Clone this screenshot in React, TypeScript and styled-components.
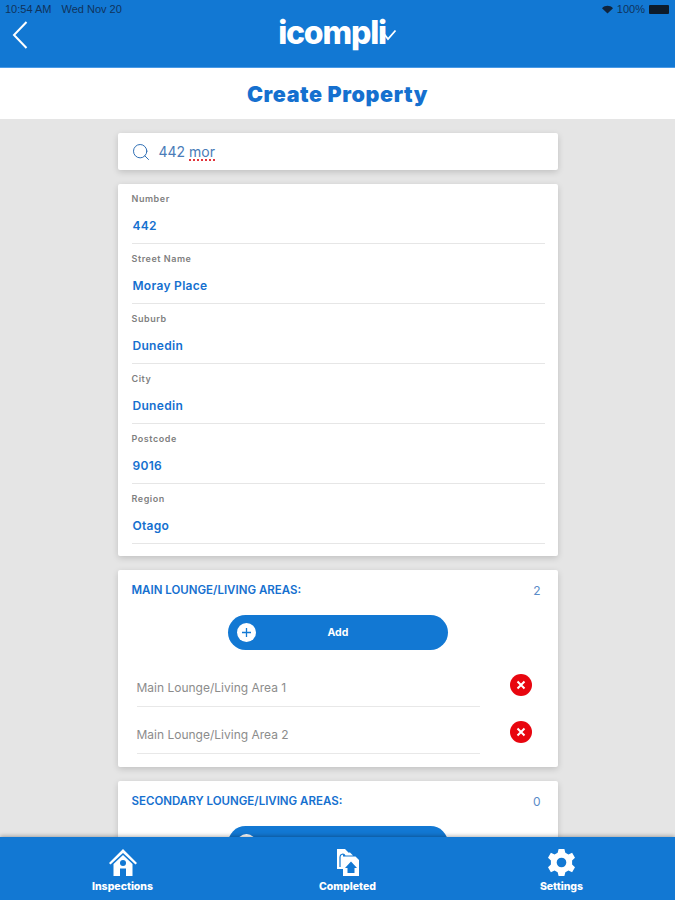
import React from "react";
import styled, { createGlobalStyle } from "styled-components";
import { Search } from "lucide-react";

const blue = "#1278d3";
const textBlue = "#1570cf";

const GlobalStyle = createGlobalStyle`
    html, body {
        margin: 0;
        padding: 0;
        background: #e5e5e5;
    }
    * {
        box-sizing: border-box;
    }
`;

const fields = [
    { label: "Number", value: "442" },
    { label: "Street Name", value: "Moray Place" },
    { label: "Suburb", value: "Dunedin" },
    { label: "City", value: "Dunedin" },
    { label: "Postcode", value: "9016" },
    { label: "Region", value: "Otago" },
];

const areas = ["Main Lounge/Living Area 1", "Main Lounge/Living Area 2"];

const WifiIcon = () => (
    <svg width="11" height="9" viewBox="0 0 11 9">
        <path d="M5.5 8.6 0 3.2C3.2 0 7.8 0 11 3.2Z" fill="#10243c" />
    </svg>
);

const BackIcon = () => (
    <svg width="16" height="28" viewBox="0 0 16 28">
        <path d="M14.5 1 2 14l12.5 13" fill="none" stroke="#fff" strokeWidth="2" />
    </svg>
);

const LogoCheck = () => (
    <svg width="14" height="12" viewBox="0 0 14 12">
        <path d="M1.500 5.500 5 10l7.500-8.500" fill="none" stroke="#fff" strokeWidth="1.800" />
    </svg>
);

const PlusCircle = () => (
    <svg width="19" height="19" viewBox="0 0 19 19">
        <circle cx="9.5" cy="9.5" r="9.5" fill="#fff" />
        <path d="M9.5 5v9M5 9.5h9" stroke={blue} strokeWidth="1.3" />
    </svg>
);

const RemoveIcon = () => (
    <svg width="22" height="22" viewBox="0 0 22 22">
        <circle cx="11" cy="11" r="11" fill="#e8060f" />
        <path d="M7.5 7.5l7 7M14.5 7.5l-7 7" stroke="#fff" strokeWidth="2" />
    </svg>
);

const HomeIcon = () => (
    <svg width="28" height="27" viewBox="0 0 28 27">
        <path d="M14 0 28 14l-1.500 1.500L14 4 1.500 15.500 0 14Z" fill="#fff" />
        <path d="M14 6 23.500 15v12h-6.500v-6.500h-6V27H4.500V15Z" fill="#fff" />
        <circle cx="14" cy="14" r="3" fill={blue} />
        <rect x="11" y="19.500" width="6" height="7.500" fill={blue} />
    </svg>
);

const CompletedIcon = () => (
    <svg width="26" height="27" viewBox="0 0 26 27">
        <path d="M2 0h8l3 3v3H8v14H2Z" fill="#fff" />
        <path d="M9 3.500h6l3 3H9Z" fill="#fff" />
        <path d="M8 7.500h12.500L24 11v16H8Z" fill="#fff" />
        <path d="M16 12.500 22 19h-2.500v5h-7v-5H10Z" fill={blue} />
        <path d="M5 18V8c0-3 4-4 5-1" fill="none" stroke={blue} strokeWidth="1.200" />
    </svg>
);

const GearIcon = () => (
    <svg width="27" height="27" viewBox="0 0 28 28">
        <path
            fillRule="evenodd"
            fill="#fff"
            d="M11 0h6l1 4 3.200 1.600L25 4l3 5.200-3 2.800v4l3 2.800L25 24l-3.800-1.600L18 24l-1 4h-6l-1-4-3.200-1.600L3 24 0 18.800l3-2.800v-4L0 9.200 3 4l3.800 1.600L10 4ZM14 9a5 5 0 1 0 0 10a5 5 0 0 0 0-10Z"
        />
    </svg>
);

const App: React.FC = () => {
    return (
        <>
            <GlobalStyle />
            <Page>
                <Header>
                    <StatusBar>
                        <StatusGroup>
                            <span>10:54 AM</span>
                            <span>Wed Nov 20</span>
                        </StatusGroup>
                        <StatusGroup tight>
                            <WifiIcon />
                            <span>100%</span>
                            <Battery />
                        </StatusGroup>
                    </StatusBar>
                    <HeaderRow>
                        <BackButton>
                            <BackIcon />
                        </BackButton>
                        <Logo>
                            icompli
                            <LogoMark>
                                <LogoCheck />
                            </LogoMark>
                        </Logo>
                    </HeaderRow>
                </Header>

                <TitleBar>Create Property</TitleBar>

                <Content>
                    <SearchCard>
                        <Search size={20} strokeWidth={1.2} color="#2f6fb5" />
                        <SearchText>
                            442 <Misspelt>mor</Misspelt>
                        </SearchText>
                    </SearchCard>

                    <AddressCard>
                        {fields.map((field) => (
                            <Field key={field.label}>
                                <FieldLabel>{field.label}</FieldLabel>
                                <FieldValue>{field.value}</FieldValue>
                            </Field>
                        ))}
                    </AddressCard>

                    <AreaCard>
                        <AreaHeading>
                            <AreaTitle>MAIN LOUNGE/LIVING AREAS:</AreaTitle>
                            <AreaCount>2</AreaCount>
                        </AreaHeading>
                        <AddButton>
                            <PlusCircle />
                            Add
                        </AddButton>
                        <AreaList>
                            {areas.map((area) => (
                                <AreaRow key={area}>
                                    <AreaName>{area}</AreaName>
                                    <RemoveSlot>
                                        <RemoveIcon />
                                    </RemoveSlot>
                                </AreaRow>
                            ))}
                        </AreaList>
                    </AreaCard>

                    <AreaCard>
                        <AreaHeading>
                            <AreaTitle>SECONDARY LOUNGE/LIVING AREAS:</AreaTitle>
                            <AreaCount>0</AreaCount>
                        </AreaHeading>
                        <AddButton>
                            <PlusCircle />
                            Add
                        </AddButton>
                    </AreaCard>
                </Content>

                <BottomNav>
                    <NavItem>
                        <HomeIcon />
                        Inspections
                    </NavItem>
                    <NavItem>
                        <CompletedIcon />
                        Completed
                    </NavItem>
                    <NavItem>
                        <GearIcon />
                        Settings
                    </NavItem>
                </BottomNav>
            </Page>
        </>
    );
};

const Page = styled.div`
    position: relative;
    width: 675px;
    height: 900px;
    overflow: hidden;
    background: #e5e5e5;
    font-family: "Inter", "Liberation Sans", sans-serif;
`;

const Header = styled.header`
    height: 68px;
    background: ${blue};
    border-bottom: 1px solid #4a9ae6;
`;

const StatusBar = styled.div`
    height: 18px;
    padding: 0 6px 0 5px;
    display: flex;
    align-items: center;
    justify-content: space-between;
    font-family: "Liberation Sans", sans-serif;
    font-size: 11px;
    color: #10335c;
`;

const StatusGroup = styled.div<{ tight?: boolean }>`
    display: flex;
    align-items: center;
    gap: ${(props) => (props.tight ? "4px" : "10px")};
`;

const Battery = styled.div`
    width: 20px;
    height: 9px;
    background: #0d1b2a;
    border-radius: 1px;
`;

const HeaderRow = styled.div`
    position: relative;
    height: 30px;
    display: flex;
    justify-content: center;
`;

const BackButton = styled.div`
    position: absolute;
    left: 12px;
    top: 3px;
    display: flex;
`;

const Logo = styled.div`
    display: flex;
    align-items: center;
    height: 30px;
    margin-top: -1px;
    font-family: "Inter", sans-serif;
    font-size: 32px;
    font-weight: 800;
    letter-spacing: -1.2px;
    color: #fff;
`;

const LogoMark = styled.span`
    display: flex;
    margin-left: -3px;
    margin-top: 5px;
`;

const TitleBar = styled.h1`
    height: 51px;
    margin: 0;
    display: flex;
    align-items: center;
    justify-content: center;
    background: #fff;
    font-family: "Inter", sans-serif;
    font-size: 21.5px;
    font-weight: 900;
    letter-spacing: 0.6px;
    color: ${textBlue};
`;

const Content = styled.main`
    width: 440px;
    margin: 14px auto 0;
    display: flex;
    flex-direction: column;
    gap: 14px;
`;

const Card = styled.section`
    background: #fff;
    border-radius: 2px;
    box-shadow: 0 2px 6px rgba(0, 0, 0, 0.16);
`;

const SearchCard = styled(Card)`
    height: 37px;
    padding: 0 14px 0 13px;
    display: flex;
    align-items: center;
    gap: 8px;
`;

const SearchText = styled.span`
    font-family: "Inter", sans-serif;
    font-size: 14px;
    color: #4a7cb8;
`;

const Misspelt = styled.span`
    text-decoration: underline dotted #e2343c 1.5px;
    text-underline-offset: 2px;
`;

const AddressCard = styled(Card)`
    height: 372px;
    padding: 0 13px 0 14px;
`;

const Field = styled.div`
    height: 60px;
    padding-top: 9px;
    border-bottom: 1px solid #e6e6e6;
`;

const FieldLabel = styled.div`
    height: 12px;
    line-height: 12px;
    font-size: 9px;
    font-weight: 600;
    letter-spacing: 0.55px;
    color: #7f7f7f;
`;

const FieldValue = styled.div`
    margin-top: 13px;
    margin-left: 1px;
    height: 16px;
    line-height: 16px;
    font-size: 12px;
    font-weight: 600;
    letter-spacing: 0.3px;
    color: ${textBlue};
`;

const AreaCard = styled(Card)`
    padding: 0 14px 13px;
`;

const AreaHeading = styled.div`
    height: 31px;
    padding-top: 9px;
    display: flex;
    align-items: center;
    justify-content: space-between;
`;

const AreaTitle = styled.h2`
    margin: 0;
    font-size: 11.5px;
    font-weight: 600;
    color: ${textBlue};
`;

const AreaCount = styled.span`
    margin-right: 3px;
    font-size: 12px;
    color: #5a8cc8;
`;

const AddButton = styled.div`
    position: relative;
    width: 220px;
    height: 35px;
    margin: 14px auto 0;
    padding-left: 9px;
    display: flex;
    align-items: center;
    background: ${blue};
    border-radius: 18px;
    font-size: 10.5px;
    font-weight: 700;
    color: #fff;

    svg {
        flex: none;
        margin-right: 72px;
    }
`;

const AreaList = styled.div`
    margin-top: 10px;
    padding-left: 5px;
`;

const AreaRow = styled.div`
    height: 47px;
    display: flex;
    align-items: stretch;
`;

const AreaName = styled.div`
    width: 343px;
    display: flex;
    align-items: center;
    padding-top: 8px;
    border-bottom: 1px solid #e8e8e8;
    font-size: 12px;
    color: #8c8c8c;
`;

const RemoveSlot = styled.div`
    margin-left: 30px;
    padding-top: 14px;
`;

const BottomNav = styled.nav`
    position: absolute;
    left: 0;
    right: 0;
    bottom: 0;
    height: 63px;
    padding: 12px 2px 0 0;
    display: grid;
    grid-template-columns: 245px 205px 1fr;
    background: ${blue};
    box-shadow: 0 -1px 4px rgba(0, 0, 0, 0.3);
`;

const NavItem = styled.div`
    display: flex;
    flex-direction: column;
    align-items: center;
    gap: 4px;
    font-size: 10.5px;
    font-weight: 800;
    color: #fff;
`;

export default App;
